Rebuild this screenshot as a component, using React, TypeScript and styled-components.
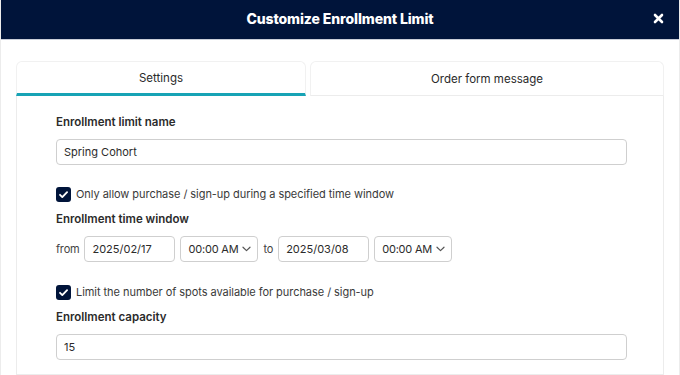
import React, { useState } from 'react';
import styled, { createGlobalStyle } from 'styled-components';

const GlobalStyle = createGlobalStyle`
  html, body {
    margin: 0;
    padding: 0;
    background: #ffffff;
    font-family: 'Inter', 'Liberation Sans', sans-serif;
    color: #1e1e1e;
  }
  * { box-sizing: border-box; }
`;

const Modal = styled.div`
  width: 680px;
  height: 375px;
  overflow: hidden;
  background: #ffffff;
  border-left: 1px solid #ececec;
  border-right: 1px solid #ececec;
`;

const Header = styled.div`
  height: 40px;
  background: #00143a;
  border-bottom: 1px solid #c9ced8;
  display: flex;
  align-items: center;
  justify-content: center;
  position: relative;
`;

const Title = styled.h1`
  margin: 0 0 2px;
  color: #ffffff;
  font-size: 14px;
  font-weight: 800;
  letter-spacing: -0.1px;
`;

const Close = styled.button`
  position: absolute;
  right: 13px;
  top: 10px;
  width: 16px;
  height: 16px;
  padding: 0;
  border: none;
  background: none;
  cursor: pointer;
  display: flex;
  align-items: center;
  justify-content: center;
`;

const Body = styled.div`
  padding: 21px 15px 0 15px;
`;

const Tabs = styled.div`
  display: flex;
  gap: 4px;
`;

const Tab = styled.div<{ $active?: boolean }>`
  flex: ${p => (p.$active ? '0 0 290px' : '1')};
  height: 35px;
  display: flex;
  align-items: center;
  justify-content: center;
  font-size: 11.5px;
  color: #2a2a2a;
  background: #ffffff;
  border: 1px solid #f1f1f1;
  border-bottom: ${p => (p.$active ? '3px solid #17a3b5' : '1px solid #ececec')};
  border-radius: 6px 6px 0 0;
  cursor: pointer;
`;

const Panel = styled.div`
  border: 1px solid #ececec;
  border-top: none;
  height: 279px;
  padding: 19px 36px 0 39px;
`;

const Label = styled.div`
  font-size: 11.5px;
  line-height: 14px;
  font-weight: 600;
  color: #2b2b2b;
  margin-bottom: 10px;
`;

const TextInput = styled.input`
  display: block;
  width: 100%;
  height: 26px;
  border: 1px solid #cfcfcf;
  border-radius: 4px;
  padding: 0 7px;
  font-family: inherit;
  font-size: 11px;
  color: #2b2b2b;
  outline: none;
`;

const CheckRow = styled.label<{ $top: number }>`
  display: flex;
  align-items: center;
  gap: 5px;
  font-size: 11px;
  line-height: 15px;
  letter-spacing: -0.05px;
  color: #3a3a3a;
  margin: ${p => p.$top}px 0 10px;
  cursor: pointer;
`;

const Box = styled.span`
  width: 15px;
  height: 15px;
  border-radius: 3px;
  background: #00143a;
  display: inline-flex;
  align-items: center;
  justify-content: center;
  flex-shrink: 0;
`;

const TimeRow = styled.div`
  display: flex;
  align-items: center;
  gap: 5px;
  font-size: 11px;
  letter-spacing: -0.2px;
  color: #444;
`;

const DateInput = styled.input`
  width: 91px;
  height: 26px;
  border: 1px solid #cfcfcf;
  border-radius: 4px;
  padding: 0 7px;
  font-family: inherit;
  font-size: 11px;
  color: #2b2b2b;
  outline: none;
`;

const Select = styled.div`
  width: 78px;
  height: 26px;
  border: 1px solid #cfcfcf;
  border-radius: 4px;
  padding: 0 6px 0 7px;
  display: flex;
  align-items: center;
  gap: 4px;
  white-space: nowrap;
  font-size: 11px;
  letter-spacing: -0.2px;
  color: #2b2b2b;
`;

const Spacer = styled.div<{ $h: number }>`
  height: ${p => p.$h}px;
`;

const Check = () => (
  <svg width="11" height="11" viewBox="0 0 12 12">
    <path d="M2.2 6.3l2.5 2.5 5.2-5.4" fill="none" stroke="#fff" strokeWidth="2" strokeLinecap="round" strokeLinejoin="round" />
  </svg>
);

const Chevron = () => (
  <svg width="9" height="6" viewBox="0 0 9 6">
    <path d="M1 1.2l3.5 3.4L8 1.2" fill="none" stroke="#555" strokeWidth="1.2" strokeLinecap="round" strokeLinejoin="round" />
  </svg>
);

const Checkbox: React.FC<{ text: string; top: number }> = ({ text, top }) => (
  <CheckRow $top={top}>
    <Box>
      <Check />
    </Box>
    {text}
  </CheckRow>
);

const App: React.FC = () => {
  const [tab, setTab] = useState(0);
  const [name, setName] = useState('Spring Cohort');
  const [from, setFrom] = useState('2025/02/17');
  const [to, setTo] = useState('2025/03/08');
  const [cap, setCap] = useState('15');

  return (
    <>
      <GlobalStyle />
      <Modal>
        <Header>
          <Title>Customize Enrollment Limit</Title>
          <Close aria-label="Close">
            <svg width="11" height="11" viewBox="0 0 11 11">
              <path d="M2 2l7 7M9 2l-7 7" stroke="#fff" strokeWidth="2.6" strokeLinecap="round" />
            </svg>
          </Close>
        </Header>
        <Body>
          <Tabs>
            <Tab $active={tab === 0} onClick={() => setTab(0)}>Settings</Tab>
            <Tab $active={tab === 1} onClick={() => setTab(1)}>Order form message</Tab>
          </Tabs>
          <Panel>
            <Label>Enrollment limit name</Label>
            <TextInput value={name} onChange={e => setName(e.target.value)} />
            <Checkbox top={22} text="Only allow purchase / sign-up during a specified time window" />
            <Label>Enrollment time window</Label>
            <TimeRow>
              from
              <DateInput value={from} onChange={e => setFrom(e.target.value)} />
              <Select>00:00 AM <Chevron /></Select>
              to
              <DateInput value={to} onChange={e => setTo(e.target.value)} />
              <Select>00:00 AM <Chevron /></Select>
            </TimeRow>
            <Checkbox top={23} text="Limit the number of spots available for purchase / sign-up" />
            <Label>Enrollment capacity</Label>
            <TextInput value={cap} onChange={e => setCap(e.target.value)} />
            <Spacer $h={4} />
          </Panel>
        </Body>
      </Modal>
    </>
  );
};

export default App;
